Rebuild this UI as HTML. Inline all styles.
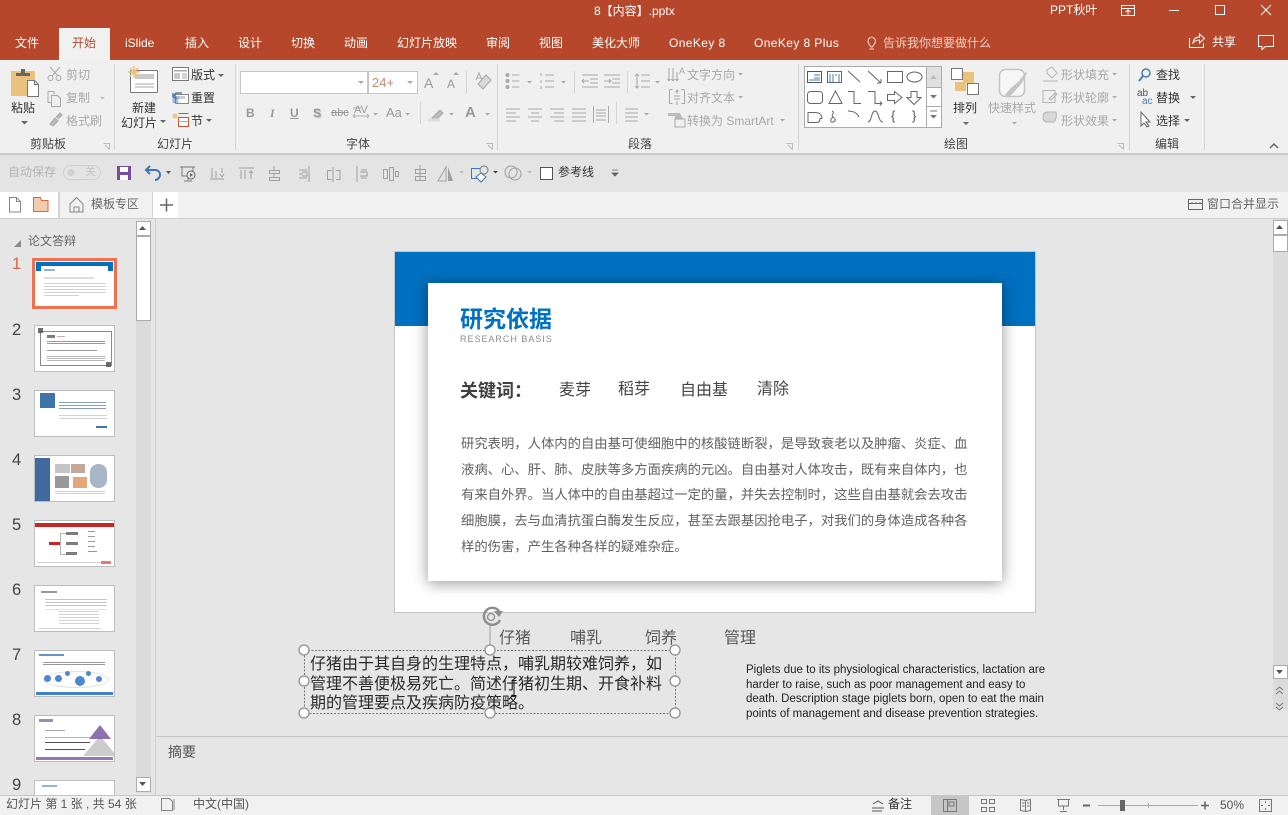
<!DOCTYPE html>
<html lang="zh-CN"><head><meta charset="utf-8"><title>8【内容】.pptx</title>
<style>
html,body{margin:0;padding:0}
body{width:1288px;height:815px;overflow:hidden;position:relative;background:#e6e6e6;font-family:"Liberation Sans","Noto Sans CJK SC",sans-serif;font-size:12px;color:#444}
.b{position:absolute}
.t{position:absolute;white-space:nowrap;line-height:18px;height:18px}
.w{color:#fff}.g{color:#a9a9a9}.d{color:#333}
.lb{color:#444}
svg{position:absolute;left:0;top:0}
.body{font-size:13.33px;color:#626262;left:461px;line-height:18px}
.kw{font-size:16px;color:#444}
.sel{font-size:16px;color:#2a2a2a;left:310px}
.en{font-size:11.5px;color:#222;left:746px;font-family:"Liberation Sans",sans-serif}
.n{font-size:16.5px;color:#444;left:12px;font-family:"Liberation Sans",sans-serif}
.th{position:absolute;left:34px;width:79px;height:45px;background:#fff;border:1px solid #bdbdbd;overflow:hidden}
.th i{position:absolute;display:block;filter:blur(.35px);opacity:.85}
</style></head><body>
<!-- backgrounds -->
<div class="b" style="left:0;top:0;width:1288px;height:60px;background:#b7472a"></div>
<div class="b" style="left:59px;top:28px;width:51px;height:32px;background:#f1f1f1"></div>
<div class="b" style="left:0;top:60px;width:1288px;height:93px;background:#f0f0f0;border-bottom:2px solid #c9c9c9"></div>
<div class="b" style="left:0;top:155px;width:1288px;height:37px;background:#e4e4e4"></div>
<div class="b" style="left:0;top:192px;width:1288px;height:26px;background:#f1f1f1;border-bottom:1px solid #cfcfcf"></div>
<div class="b" style="left:0;top:192px;width:58px;height:26px;background:#fff"></div>
<div class="b" style="left:58px;top:192px;width:2px;height:26px;background:#d4d4d4"></div>
<div class="b" style="left:152px;top:192px;width:1px;height:26px;background:#d4d4d4"></div>
<div class="b" style="left:153px;top:192px;width:25px;height:26px;background:#fff"></div>
<div class="b" style="left:155px;top:219px;width:1px;height:576px;background:#d0d0d0"></div>
<div class="b" style="left:136px;top:221px;width:15px;height:572px;background:#dbdbdb"></div>
<div class="b" style="left:1273px;top:219px;width:15px;height:490px;background:#dbdbdb"></div>
<div class="b" style="left:156px;top:736px;width:1132px;height:1px;background:#c6c6c6"></div>
<div class="b" style="left:0;top:795px;width:1288px;height:20px;background:#f1f1f1;border-top:1px solid #c6c6c6;box-sizing:border-box"></div>
<div class="b" style="left:931px;top:796px;width:38px;height:19px;background:#c6c6c6"></div>

<!-- scrollbars -->
<div class="b" style="left:136px;top:221px;width:13px;height:13px;background:#fff;border:1px solid #ababab"></div>
<div class="b" style="left:136px;top:236px;width:13px;height:83px;background:#fff;border:1px solid #ababab"></div>
<div class="b" style="left:136px;top:777px;width:13px;height:13px;background:#fff;border:1px solid #ababab"></div>
<div class="b" style="left:1273px;top:220px;width:13px;height:13px;background:#fff;border:1px solid #ababab"></div>
<div class="b" style="left:1273px;top:235px;width:13px;height:15px;background:#fff;border:1px solid #ababab"></div>
<div class="b" style="left:1273px;top:665px;width:13px;height:12px;background:#fff;border:1px solid #ababab"></div>

<!-- font boxes -->
<div class="b" style="left:240px;top:71px;width:126px;height:21px;background:#fff;border:1px solid #c6c6c6"></div>
<div class="b" style="left:368px;top:71px;width:48px;height:21px;background:#fff;border:1px solid #c6c6c6"></div>
<!-- gallery -->
<div class="b" style="left:804px;top:66px;width:136px;height:60px;background:#fff;border:1px solid #ababab"></div>
<div class="b" style="left:926px;top:67px;width:14px;height:20px;background:#e0e0e0;border-left:1px solid #ababab"></div>
<div class="b" style="left:926px;top:87px;width:14px;height:19px;background:#fff;border-left:1px solid #ababab;border-top:1px solid #ababab"></div>
<div class="b" style="left:926px;top:106px;width:14px;height:20px;background:#fff;border-left:1px solid #ababab;border-top:1px solid #ababab"></div>

<!-- slide -->
<div class="b" style="left:394px;top:251px;width:640px;height:360px;background:#fff;border:1px solid #c4c4c4"></div>
<div class="b" style="left:395px;top:252px;width:640px;height:74px;background:#0070c0"></div>
<div class="b" style="left:428px;top:283px;width:574px;height:298px;background:#fff;box-shadow:0 2px 14px rgba(0,0,0,.42)"></div>
<div class="t" style="left:460px;top:307px;font-size:23px;line-height:24px;height:24px;font-weight:bold;color:#0070c0">研究依据</div>
<div class="t" style="left:460px;top:330px;font-size:9px;letter-spacing:.98px;color:#8c8c8c">RESEARCH BASIS</div>
<div class="t" style="left:460px;top:381px;font-size:18px;line-height:20px;height:20px;font-weight:bold;color:#404040">关键词：</div>
<div class="t kw" style="left:559px;top:382px">麦芽</div>
<div class="t kw" style="left:618px;top:381px">稻芽</div>
<div class="t kw" style="left:680px;top:382px">自由基</div>
<div class="t kw" style="left:757px;top:381px">清除</div>
<div class="t body" style="top:435px">研究表明，人体内的自由基可使细胞中的核酸链断裂，是导致衰老以及肿瘤、炎症、血</div>
<div class="t body" style="top:461px">液病、心、肝、肺、皮肤等多方面疾病的元凶。自由基对人体攻击，既有来自体内，也</div>
<div class="t body" style="top:486px">有来自外界。当人体中的自由基超过一定的量，并失去控制时，这些自由基就会去攻击</div>
<div class="t body" style="top:512px">细胞膜，去与血清抗蛋白酶发生反应，甚至去跟基因抢电子，对我们的身体造成各种各</div>
<div class="t body" style="top:538px">样的伤害，产生各种各样的疑难杂症。</div>

<!-- below slide -->
<div class="t kw" style="left:499px;top:630px;color:#595959">仔猪</div>
<div class="t kw" style="left:570px;top:630px;color:#595959">哺乳</div>
<div class="t kw" style="left:645px;top:630px;color:#595959">饲养</div>
<div class="t kw" style="left:724px;top:630px;color:#595959">管理</div>
<div class="t sel" style="top:656px">仔猪由于其自身的生理特点，哺乳期较难饲养，如</div>
<div class="t sel" style="top:676px">管理不善便极易死亡。简述仔猪初生期、开食补料</div>
<div class="t sel" style="top:695px">期的管理要点及疾病防疫策略。</div>
<div class="t en" style="top:661px">Piglets due to its physiological characteristics, lactation are</div>
<div class="t en" style="top:676px">harder to raise, such as poor management and easy to</div>
<div class="t en" style="top:690px">death. Description stage piglets born, open to eat the main</div>
<div class="t en" style="top:705px">points of management and disease prevention strategies.</div>
<div class="t" style="left:168px;top:743px;font-size:14px;color:#555">摘要</div>

<!-- thumbnails -->
<div class="b" style="left:32px;top:258px;width:79px;height:45px;background:#fff;border:3px solid #f0704f"></div>
<div class="b" style="left:36px;top:262px;width:77px;height:9px;background:#0070c0"></div>
<div class="b" style="left:41px;top:266px;width:67px;height:20px;background:#fff"></div>
<div class="b" style="left:44px;top:269px;width:11px;height:2px;background:#8fb4d8"></div>
<div class="b" style="left:44px;top:277px;width:50px;height:2px;background:#ddd"></div>
<div class="b" style="left:44px;top:283px;width:62px;height:10px;background:repeating-linear-gradient(#d2d2d2 0 1px,#fff 1px 3px)"></div>
<div class="b" style="left:44px;top:295px;width:35px;height:1px;background:#d2d2d2"></div>

<div class="th" style="top:325px"><i style="left:5px;top:5px;width:70px;height:33px;border:1px solid #777"></i><i style="left:3px;top:2px;width:5px;height:5px;background:#555"></i><i style="left:71px;top:36px;width:5px;height:5px;background:#555"></i><i style="left:12px;top:9px;width:8px;height:3px;background:#666"></i><i style="left:22px;top:10px;width:8px;height:1px;background:#c99"></i><i style="left:12px;top:15px;width:58px;height:4px;background:repeating-linear-gradient(#888 0 1px,#fff 1px 2px)"></i><i style="left:12px;top:24px;width:50px;height:1px;background:#888"></i><i style="left:12px;top:30px;width:58px;height:5px;background:repeating-linear-gradient(#aaa 0 1px,#fff 1px 2px)"></i></div>
<div class="th" style="top:390px"><i style="left:5px;top:2px;width:15px;height:15px;background:#1d5c99"></i><i style="left:24px;top:11px;width:47px;height:8px;background:repeating-linear-gradient(#778aa6 0 1px,#fff 1px 3px)"></i><i style="left:24px;top:24px;width:48px;height:4px;background:repeating-linear-gradient(#ccc 0 1px,#fff 1px 3px)"></i><i style="left:61px;top:35px;width:11px;height:2px;background:#1d5c99"></i></div>
<div class="th" style="top:455px"><i style="left:0;top:2px;width:15px;height:43px;background:#1e4f8f"></i><i style="left:20px;top:8px;width:15px;height:9px;background:#bbb"></i><i style="left:36px;top:8px;width:14px;height:9px;background:#b98"></i><i style="left:20px;top:20px;width:14px;height:12px;background:#888"></i><i style="left:38px;top:21px;width:14px;height:11px;background:#d96"></i><i style="left:55px;top:8px;width:17px;height:24px;background:#9ab;border-radius:8px"></i><i style="left:20px;top:35px;width:50px;height:3px;background:repeating-linear-gradient(#ccc 0 1px,#fff 1px 2px)"></i></div>
<div class="th" style="top:520px"><i style="left:0;top:2px;width:79px;height:4px;background:#c00000"></i><i style="left:14px;top:21px;width:11px;height:3px;background:#c00000"></i><i style="left:31px;top:11px;width:12px;height:3px;background:#666"></i><i style="left:31px;top:21px;width:12px;height:3px;background:#666"></i><i style="left:31px;top:31px;width:11px;height:3px;background:#666"></i><i style="left:25px;top:12px;width:5px;height:20px;border:1px solid #aaa;border-right:0"></i><i style="left:53px;top:10px;width:7px;height:1px;background:#888"></i><i style="left:53px;top:15px;width:7px;height:1px;background:#888"></i><i style="left:53px;top:20px;width:7px;height:1px;background:#888"></i><i style="left:53px;top:25px;width:7px;height:1px;background:#888"></i><i style="left:53px;top:30px;width:9px;height:1px;background:#888"></i><i style="left:2px;top:41px;width:64px;height:1px;background:#ccc"></i><i style="left:66px;top:40px;width:10px;height:3px;background:#d66"></i></div>
<div class="th" style="top:585px"><i style="left:6px;top:5px;width:16px;height:2px;background:#888"></i><i style="left:10px;top:13px;width:62px;height:8px;background:repeating-linear-gradient(#bbb 0 1px,#fff 1px 3px)"></i><i style="left:10px;top:23px;width:62px;height:1px;background:#ddd"></i><i style="left:24px;top:25px;width:40px;height:14px;background:repeating-linear-gradient(#ccc 0 1px,#fff 1px 3px)"></i><i style="left:4px;top:42px;width:62px;height:1px;background:#ccc"></i></div>
<div class="th" style="top:650px"><i style="left:4px;top:3px;width:25px;height:2px;background:#4a7fc0"></i><i style="left:8px;top:11px;width:62px;height:4px;background:repeating-linear-gradient(#888 0 1px,#fff 1px 2px)"></i><i style="left:8px;top:20px;width:64px;height:15px;border:1px solid #ddd;border-radius:50%"></i><i style="left:9px;top:24px;width:7px;height:7px;background:#2e75c6;border-radius:50%"></i><i style="left:20px;top:24px;width:7px;height:7px;background:#2e75c6;border-radius:50%"></i><i style="left:30px;top:20px;width:5px;height:5px;background:#2e75c6;border-radius:50%"></i><i style="left:40px;top:25px;width:10px;height:10px;background:#2e75c6;border-radius:50%"></i><i style="left:51px;top:20px;width:5px;height:5px;background:#2e75c6;border-radius:50%"></i><i style="left:61px;top:25px;width:6px;height:6px;background:#2e75c6;border-radius:50%"></i><i style="left:1px;top:41px;width:77px;height:3px;background:#1f6cc0"></i></div>
<div class="th" style="top:715px"><i style="left:4px;top:3px;width:14px;height:3px;background:#8c7aa6"></i><i style="left:10px;top:14px;width:20px;height:1px;background:#999"></i><i style="left:10px;top:21px;width:45px;height:1px;background:#aaa"></i><i style="left:10px;top:26px;width:45px;height:1px;background:#333"></i><i style="left:10px;top:33px;width:40px;height:1px;background:#333"></i><i style="left:48px;top:20px;width:0;height:0;border-left:17px solid transparent;border-right:17px solid transparent;border-bottom:20px solid #c4c4c4"></i><i style="left:54px;top:9px;width:0;height:0;border-left:11px solid transparent;border-right:11px solid transparent;border-bottom:14px solid #7b5aa0"></i><i style="left:1px;top:41px;width:77px;height:3px;background:#8064a2"></i></div>
<div class="th" style="top:780px;height:30px;border-bottom:0"><i style="left:7px;top:4px;width:15px;height:2px;background:#7fa8d4"></i></div>
<div class="b" style="left:0;top:795px;width:151px;height:1px;background:#c6c6c6"></div>
<div class="b" style="left:0;top:796px;width:155px;height:19px;background:#f1f1f1"></div>

<!-- numbers -->
<div class="t g" style="left:28px;top:232px;color:#666">论文答辩</div>
<div class="t n" style="top:255px;color:#e0623f">1</div>
<div class="t n" style="top:321px">2</div>
<div class="t n" style="top:386px">3</div>
<div class="t n" style="top:451px">4</div>
<div class="t n" style="top:516px">5</div>
<div class="t n" style="top:581px">6</div>
<div class="t n" style="top:646px">7</div>
<div class="t n" style="top:711px">8</div>
<div class="t n" style="top:776px">9</div>

<!-- title bar & tabs -->
<div class="t w" style="left:594px;top:2px">8【内容】.pptx</div>
<div class="t w" style="left:1050px;top:1px">PPT秋叶</div>
<div class="t w" style="left:15px;top:34px">文件</div>
<div class="t" style="left:72px;top:34px;color:#b7472a">开始</div>
<div class="t w" style="left:125px;top:34px">iSlide</div>
<div class="t w" style="left:185px;top:34px">插入</div>
<div class="t w" style="left:238px;top:34px">设计</div>
<div class="t w" style="left:291px;top:34px">切换</div>
<div class="t w" style="left:344px;top:34px">动画</div>
<div class="t w" style="left:397px;top:34px">幻灯片放映</div>
<div class="t w" style="left:486px;top:34px">审阅</div>
<div class="t w" style="left:539px;top:34px">视图</div>
<div class="t w" style="left:592px;top:34px">美化大师</div>
<div class="t w" style="left:669px;top:34px;letter-spacing:.4px">OneKey 8</div>
<div class="t w" style="left:754px;top:34px;letter-spacing:.4px">OneKey 8 Plus</div>
<div class="t" style="left:883px;top:34px;color:#f0cfc4">告诉我你想要做什么</div>
<div class="t w" style="left:1212px;top:33px">共享</div>

<!-- clipboard -->
<div class="t d" style="left:11px;top:99px">粘贴</div>
<div class="t g" style="left:66px;top:66px">剪切</div>
<div class="t g" style="left:66px;top:89px">复制</div>
<div class="t g" style="left:66px;top:112px">格式刷</div>
<div class="t lb" style="left:30px;top:135px">剪贴板</div>
<!-- slides -->
<div class="t d" style="left:132px;top:99px">新建</div>
<div class="t d" style="left:121px;top:114px">幻灯片</div>
<div class="t d" style="left:191px;top:66px">版式</div>
<div class="t d" style="left:191px;top:89px">重置</div>
<div class="t d" style="left:191px;top:112px">节</div>
<div class="t lb" style="left:157px;top:135px">幻灯片</div>
<!-- font -->
<div class="t" style="left:372px;top:74px;color:#c28a70;font-size:13px">24+</div>
<div class="t g" style="left:246px;top:104px;font-weight:bold;color:#999">B</div>
<div class="t g" style="left:270px;top:104px;font-style:italic;font-family:'Liberation Serif',serif;font-weight:bold;color:#999">I</div>
<div class="t g" style="left:290px;top:104px;font-weight:bold;text-decoration:underline;color:#999">U</div>
<div class="t g" style="left:313px;top:104px;font-weight:bold;color:#999;text-shadow:1px 1px 1px #bbb">S</div>
<div class="t g" style="left:331px;top:104px;color:#999;text-decoration:line-through;font-size:11px">abc</div>
<div class="t g" style="left:354px;top:101px;color:#999;font-size:11px">AV</div>
<div class="t g" style="left:386px;top:104px;color:#999;font-size:13px">Aa</div>
<div class="t g" style="left:424px;top:74px;color:#999;font-size:14px">A</div>
<div class="t g" style="left:447px;top:75px;color:#999;font-size:12px">A</div>
<div class="t g" style="left:465px;top:104px;color:#999;font-size:15px;font-weight:bold">A</div>
<div class="t lb" style="left:346px;top:135px">字体</div>
<!-- para -->
<div class="t g" style="left:687px;top:66px">文字方向</div>
<div class="t g" style="left:687px;top:89px">对齐文本</div>
<div class="t g" style="left:687px;top:112px">转换为 SmartArt</div>
<div class="t lb" style="left:628px;top:135px">段落</div>
<!-- drawing -->
<div class="t d" style="left:953px;top:99px">排列</div>
<div class="t g" style="left:988px;top:99px">快速样式</div>
<div class="t g" style="left:1061px;top:66px">形状填充</div>
<div class="t g" style="left:1061px;top:89px">形状轮廓</div>
<div class="t g" style="left:1061px;top:112px">形状效果</div>
<div class="t lb" style="left:944px;top:135px">绘图</div>
<div class="t d" style="left:1156px;top:66px">查找</div>
<div class="t d" style="left:1156px;top:89px">替换</div>
<div class="t d" style="left:1156px;top:112px">选择</div>
<div class="t lb" style="left:1155px;top:135px">编辑</div>
<div class="t" style="left:891px;top:107px;font-size:13px;color:#555">{</div>
<div class="t" style="left:912px;top:107px;font-size:13px;color:#555">}</div>

<!-- QAT -->
<div class="t g" style="left:8px;top:163px;color:#b4b4b4">自动保存</div>
<div class="t" style="left:85px;top:163px;color:#c4c4c4;font-size:11px">关</div>
<div class="t d" style="left:558px;top:163px">参考线</div>
<!-- tabs -->
<div class="t" style="left:91px;top:195px;color:#666">模板专区</div>
<div class="t" style="left:1207px;top:195px;color:#666">窗口合并显示</div>

<!-- status -->
<div class="t" style="left:6px;top:795px;color:#555">幻灯片 第 1 张 , 共 54 张</div>
<div class="t" style="left:193px;top:795px;color:#555">中文(中国)</div>
<div class="t d" style="left:888px;top:795px">备注</div>
<div class="t" style="left:1220px;top:796px;color:#555">50%</div>

<svg width="1288" height="815" viewBox="0 0 1288 815" fill="none">
<!-- window controls -->
<g stroke="#fff" stroke-width="1">
<path d="M1121.500 5.500h13v10h-13zM1121.500 8.500h13M1128 14.500v-4M1125.500 12l2.500-2 2.500 2"/>
<path d="M1169 10.500h10"/><rect x="1215.500" y="5.500" width="9" height="9"/><path d="M1261 5l10 10M1271 5l-10 10"/>
<path d="M1189.500 38v9.500h14V43M1193 43c.5-4 3-6 6.500-6v-3l5 4.500-5 4.500v-3c-2.500 0-5 1-6.500 3z"/>
<path d="M1258.500 35.500h15v11h-8l-3.500 3v-3h-3.500z"/>
</g>
<path d="M871 47c-1-2-3-3-3-6a3.700 3.700 0 0 1 7.400 0c0 3-2 4-3 6zM869.500 49h4.500" stroke="#f6ded6"/>

<!-- separators -->
<path d="M114.500 64v86M235.500 64v86M497.500 64v86M798.500 64v86M1129.500 64v86M1204.500 64v86" stroke="#d4d4d4"/>
<path d="M466.500 71v22M574.500 71v22M627.500 71v22M616.500 102v22M420.500 102v22" stroke="#d4d4d4"/>
<!-- dialog launchers -->
<path d="M103.500 143.500h6v6M105 145l4 4M486.500 143.500h6v6M488 145l4 4M786.500 143.500h6v6M788 145l4 4M1117.500 143.500h6v6M1119 145l4 4" stroke="#bbb"/>
<path d="M1270 148l4-4 4 4" stroke="#666" stroke-width="1.500"/>

<!-- paste -->
<rect x="11" y="71" width="24" height="25" fill="#eac27e"/>
<path d="M16 73h5v-4h4v4h5v3H16z" fill="#666"/>
<path d="M27.500 80.500h7l4 4v12h-11z" fill="#fff" stroke="#777"/>
<path d="M34.500 80.500v4h4" stroke="#777"/>
<g fill="#666"><path d="M21 121h7l-3.500 3.500zM160 120h6l-3 3zM218 74h6l-3 3zM206 119h6l-3 3zM1190 96h6l-3 3zM1184 119h6l-3 3z"/></g>
<!-- scissors etc -->
<g stroke="#aaa" fill="none">
<path d="M50 67l8 9M60 67l-8 9"/><circle cx="50.500" cy="78" r="2.500"/><circle cx="58.500" cy="78" r="2.500"/>
<path d="M48 91.500h6v3M51.500 95.500h6l3 3v8h-9zM48 91.500v11h3"/>
<path d="M50 124l5-6 3 3-5 5zM56 117l4-4 2 2-4 4" fill="#bbb"/>
</g>
<path d="M100 97h5l-2.500 2.500z" fill="#bbb"/>
<!-- new slide -->
<rect x="130.500" y="70.500" width="27" height="22" rx="1" fill="#fff" stroke="#777"/>
<rect x="135" y="74" width="19" height="5" fill="#c9c9c9"/>
<path d="M135 84h19M135 87h19" stroke="#aaa"/>
<g stroke="#eac27e" stroke-width="1.500"><path d="M134 66v12M128 72h12M130 68l8 8M138 68l-8 8"/></g>
<!-- layout -->
<rect x="172.500" y="67.500" width="16" height="13" fill="#fff" stroke="#777"/>
<path d="M174 70h13v1.500h-13z" fill="#aaa"/><rect x="174" y="73" width="6" height="6" fill="#c9c9c9"/><path d="M182 74h5M182 76h5M182 78h5" stroke="#aaa"/>
<!-- reset -->
<rect x="175.500" y="94.500" width="13" height="9" fill="#fff" stroke="#888"/>
<path d="M178 96h7v3h-7z" fill="#ccc"/>
<path d="M173 97l3-4h6M173 97l4 1.500M173 97v-4" stroke="#4a7fb5" stroke-width="1.500" fill="none"/>
<path d="M172.500 96h6v7h-6z" fill="#4a7fb5" opacity=".5"/>
<!-- section -->
<path d="M178.500 113.500h10M178.500 117.500h10v9h-10z" stroke="#c8553a" fill="#fff"/>
<path d="M178.500 121.500h10" stroke="#aaa"/>
<path d="M175 113v6M172 116h6M173 114l4 4M177 114l-4 4" stroke="#eac27e"/>
<!-- carets font -->
<g fill="#aaa"><path d="M358 81h6l-3 3zM407 81h6l-3 3zM373 113h5l-2.500 2.500zM405 113h5l-2.500 2.500zM449 113h5l-2.500 2.500zM485 113h5l-2.500 2.500zM527 81h5l-2.500 2.500zM561 81h5l-2.500 2.500zM655 81h5l-2.500 2.500zM644 113h5l-2.500 2.500zM738 73h5l-2.500 2.500zM738 96h5l-2.500 2.500zM780 119h5l-2.500 2.500zM1112 73h5l-2.500 2.500zM1112 96h5l-2.500 2.500zM1112 119h5l-2.500 2.500zM1012 122h5l-2.500 2.500zM433 75l3-3 3 3zM453 75l3-3 3 3z"/></g>
<g stroke="#a9a9a9">
<path d="M361 108h-8M353 116h16M353 116l2-2M353 116l2 2M369 116l-2-2M369 116l-2 2" opacity=".9"/>
<!-- clear format -->
<path d="M478 84l8-9 5 5-8 9z" fill="#d8d8d8"/><path d="M476 80l3-7 3 7M477 78h4"/>
<!-- highlight -->
<path d="M432 118l8-8 3 3-8 8z" fill="#bbb"/>
<path d="M428 120h12" stroke="#ddd" stroke-width="3"/>
<!-- bullets -->
<path d="M512 75h7.500M512 81h7.500M512 87h7.500M545 75h9M545 81h9M545 87h9"/>
<circle cx="507.500" cy="75" r="1.500" fill="#aaa"/><circle cx="507.500" cy="81" r="1.500" fill="#aaa"/><circle cx="507.500" cy="87" r="1.500" fill="#aaa"/>
<path d="M541 73v3M541 80v3M541 86v3"/>
<!-- indent -->
<path d="M582 75h16M590 79h8M590 83h8M582 87h16M589 81h-7M584 79l-2 2 2 2M604 75h16M612 79h8M612 83h8M604 87h16M604 81h7M609 79l2 2-2 2"/>
<!-- line spacing -->
<path d="M641 75h9M641 81h9M641 87h9M637 74v14M635 76l2-2 2 2M635 86l2 2 2-2"/>
<!-- align -->
<path d="M506 109h14M506 113h10M506 117h14M506 121h10M528 109h14M531 113h8M528 117h14M531 121h8M550 109h14M554 113h10M550 117h14M554 121h10M572 109h14M572 113h14M572 117h14M572 121h14M593.500 106v17M608.500 106v17M596 110h10M596 113h10M596 116h10M596 120h10"/>
<path d="M625 109h13M625 113h13M625 117h13M625 121h13"/>
<!-- text dir -->
<path d="M669 68v13M673 68v13M677 72v9M669 81l-1.500-2M669 81l1.500-2M673 81l-1.500-2M673 81l1.500-2M677 81l-1.500-2M677 81l1.500-2"/>
<path d="M669.500 89.500h3M669.500 89.500v14h3M684 89.500h-3M684.500 89.500v14h-3M674 96h6M674 99h6M677 90v4M675.500 92l1.500-2 1.500 2M677 105v-4"/>
</g>
<path d="M668 113h12l3 6h-8v-3h-7z" fill="#bbb"/><rect x="675" y="119" width="10" height="8" fill="#f0f0f0" stroke="#aaa"/>
<text x="679" y="74" font-size="9" fill="#aaa" font-family="Liberation Sans">A</text>
<!-- arrange -->
<rect x="963" y="72" width="11" height="11" fill="#eac27e"/>
<rect x="955" y="82" width="11" height="9" fill="#eac27e"/>
<rect x="951.500" y="68.500" width="11" height="11" fill="#fff" stroke="#777"/>
<rect x="967.500" y="83.500" width="11" height="11" fill="#fff" stroke="#777"/>
<path d="M963 122h6l-3 3z" fill="#666"/>
<!-- quick style -->
<rect x="999.500" y="69.500" width="25" height="27" rx="6" fill="#f6f6f6" stroke="#c4c4c4" stroke-width="1.500"/>
<path d="M1005 95l5-6 9-8 7-9 1 1-5 10-8 9-5 5z" fill="#c4c4c4"/>
<!-- shape effect icons -->
<g stroke="#b4b4b4">
<path d="M1047 70l5-3 5 6-5 5-5-5zM1043 81h15"/>
<path d="M1043 90.500h12v12h-12zM1049 99l6-6 2 1-6 6z" fill="#f0f0f0"/>
<path d="M1043 116c0-3 3-4 6-4h7c1 3 0 8-2 10h-7c-3 0-4-3-4-6z" fill="#d8d8d8"/>
</g>
<!-- find -->
<circle cx="1146" cy="73" r="4" stroke="#4a7fb5" stroke-width="1.500"/><path d="M1143 76l-4 5" stroke="#4a7fb5" stroke-width="2"/>
<text x="1137" y="96" font-size="10" fill="#555" font-family="Liberation Sans">ab</text>
<text x="1142" y="104" font-size="10" fill="#4a7fb5" font-family="Liberation Sans">ac</text>
<path d="M1141 112v14l3-3 3 4 2-1-3-4h4z" fill="#fff" stroke="#666"/>
<!-- gallery shapes -->
<g stroke="#666">
<rect x="807.500" y="71.500" width="14" height="11" stroke="#555"/><path d="M814 75h6M814 78h6M809 80h11" stroke="#4a7fb5"/>
<rect x="827.500" y="71.500" width="14" height="11"/><path d="M830 74v8M833 74v8M836 74v2M839 74v8" stroke="#4a7fb5"/>
<path d="M848 71l12 11M868 71l13 12M881 83v-4M881 83h-4"/>
<rect x="887.500" y="71.500" width="15" height="11"/>
<ellipse cx="914.500" cy="77" rx="7.500" ry="5"/>
<rect x="807.500" y="91.500" width="15" height="12" rx="3"/>
<path d="M835.500 91l6.500 12.500h-13zM848 91.500h6v12h7M868 91.500h7v12h7M882 103.500l-2-2M882 103.500l-2 2"/>
<path d="M887.500 94.500h7v-3l7.500 6-7.500 6v-3h-7zM911 91.500h6v6h4l-7 7-7-7h4z"/>
<path d="M808 112.500h7c4 0 7 2 7 6l-2 0c0 3-1 4-4 4h-8zM832 111c4 2-2 4 1 6s3 4 0 5-3-3 0-5M848 111c5 0 9 2 11 6M868 122c4 0 3-11 7-11s3 11 8 11"/>
</g>
<g fill="#777"><path d="M930 95h7l-3.500 3.500z"/><path d="M930 115h7l-3.500 3.500z"/></g>
<path d="M930 111h7" stroke="#777"/>
<path d="M930 79l3.500-4 3.500 4z" fill="#bbb"/>

<!-- QAT icons -->
<rect x="117" y="166" width="14" height="14" fill="#7a4e9c"/><rect x="120" y="167" width="8" height="5" fill="#fff"/><rect x="120" y="175" width="8" height="5" fill="#fff"/>
<path d="M147 170h8c4 0 5 3 5 5s-2 5-5 5" stroke="#3f75b4" stroke-width="2"/><path d="M150 166l-4 4 4 4" stroke="#3f75b4" stroke-width="2"/>
<path d="M166 171h5l-2.500 3z" fill="#555"/>
<g stroke="#777"><path d="M180 167h15M182 167v9h11v-9M188 176v4M184 181h8"/></g><circle cx="191" cy="175" r="4" fill="#e4e4e4" stroke="#666"/><path d="M190 173l3 2-3 2z" fill="#666"/>
<g stroke="#a0a0a0">
<path d="M210 179h14M212 168v10M216 171v7M222 168v5M222 177l-2-3M222 177l2-3"/>
<path d="M239 168h15M241 170v9M245 170v9M251 179v-8M249 173l2-2 2 2"/>
<path d="M274 166v4M269.500 170.500h10v3h-10zM274 174v3M269.500 177.500h10v3h-10z"/>
<path d="M309 166v16M299 170h8M299 178h8M302 172h5v4h-5M303 174h-4"/>
<path d="M333 167v15M327.500 170.500h4M336 170.500h4v9h-4M327.500 170.500v9h4"/>
<path d="M357 166v16M361 170h6M361 178h6M360 172h7v4h-7"/>
<rect x="383.500" y="169.500" width="4" height="9"/><rect x="389.500" y="167.500" width="4" height="13"/><rect x="395.500" y="171.500" width="3" height="5"/>
<path d="M420 165v16M415.500 169.500h10v4h-10zM415.500 176.500h10v4h-10z"/>
<path d="M446 167v14h-8z"/>
<circle cx="511" cy="172" r="6"/><circle cx="515" cy="174" r="6"/>
</g>
<path d="M448 167v14h5z" fill="#a0a0a0"/>
<path d="M459 171h5l-2.500 2.500zM527 171h5l-2.500 2.500z" fill="#bbb"/>
<rect x="471.500" y="168.500" width="10" height="10" stroke="#3f75b4"/>
<path d="M481 173l5 4-5 5-5-5z" fill="#fff" stroke="#3f75b4"/><circle cx="484" cy="170" r="4" stroke="#777" fill="#e4e4e4"/>
<path d="M493 171h5l-2.500 2.500z" fill="#444"/>
<rect x="540.500" y="167.500" width="12" height="12" fill="#fff" stroke="#555"/>
<path d="M612 170h6M612 173h6l-3 3z" stroke="#666" fill="#666" stroke-width=".8"/>
<!-- toggle -->
<rect x="63.500" y="165.500" width="37" height="14" rx="7" stroke="#cfcfcf"/><circle cx="71" cy="172.500" r="3.500" fill="#d0d0d0"/>

<!-- tabstrip -->
<path d="M9.500 197.500h7l4 4v10.500h-11z" stroke="#888" fill="#fff"/><path d="M16.500 197.500v4h4" stroke="#888"/>
<path d="M33.500 197.500h7l1 3h6.500v11h-14.500z" fill="#f0cdb0" stroke="#d86a3a"/>
<path d="M70 204l6.500-6.500 6.500 6.500v8h-13zM74 212v-5h5v5" stroke="#888"/>
<path d="M160 205h13M166.500 198.500v13" stroke="#666" stroke-width="1.500"/>
<path d="M1188.500 199.500h14v10h-14zM1188.500 203.500h14" stroke="#666"/><path d="M1191 203h2M1195 203h2M1199 203h2" stroke="#666"/>

<!-- panel -->
<path d="M14 247h7v-7z" fill="#8a8a8a"/>
<path d="M139 230l3.500-4 3.500 4zM1276 229l3.500-4 3.500 4z" fill="#555"/>
<path d="M139 782l3.500 4 3.500-4zM1276 670l3.500 4 3.500-4z" fill="#555"/>
<path d="M1276 690l3.500-3 3.500 3M1276 694l3.500-3 3.500 3M1276 703l3.500 3 3.500-3M1276 707l3.500 3 3.500-3" stroke="#777"/>

<!-- selection -->
<rect x="304.500" y="650.500" width="371" height="63" stroke="#777" stroke-dasharray="2 1.500"/>
<path d="M490 625v25" stroke="#999"/>
<g fill="#fff" stroke="#919191" stroke-width="1.300">
<circle cx="304" cy="650" r="5"/><circle cx="490" cy="650" r="5"/><circle cx="675" cy="650" r="5"/>
<circle cx="304" cy="681" r="5"/><circle cx="675" cy="681" r="5"/>
<circle cx="304" cy="713" r="5"/><circle cx="490" cy="713" r="5"/><circle cx="675" cy="713" r="5"/>
</g>
<path d="M499 611a8.500 8.500 0 1 0 1 9" stroke="#8c8c8c" stroke-width="2.400"/>
<circle cx="491" cy="617" r="3.500" stroke="#8c8c8c" stroke-width="1.300"/>
<path d="M494 611h9l-4 6z" fill="#8c8c8c"/>
<path d="M511.500 680.500h5M514 681v14M511.500 695.500h5" stroke="#111"/>

<!-- statusbar icons -->
<path d="M161.500 798.500h8l3 3v9h-11zM174 799v11" stroke="#888"/>
<path d="M872 808h12M872 811h10M873 804l5-3 5 3" stroke="#555"/>
<path d="M943.500 799.500h13v12h-13zM947.500 799.500v12M949 802h5v4h-5z" stroke="#777"/>
<path d="M981.500 799.500h5v4h-5zM989.500 799.500h5v4h-5zM981.500 807.500h5v4h-5zM989.500 807.500h5v4h-5z" stroke="#777"/>
<path d="M1020.500 799.500l5 1 5-1v11l-5 1-5-1zM1025.500 800v11M1022 803h2.500M1022 806h2.500M1027 803h2.500M1027 806h2.500" stroke="#777"/>
<path d="M1057 799.500h13M1058.500 800v6h10v-6M1063.500 806v4M1060 811.500h7" stroke="#777"/>
<path d="M1083 805.500h7" stroke="#666" stroke-width="2"/>
<path d="M1098 805.500h100M1148.500 803v5" stroke="#aaa"/>
<rect x="1120" y="800" width="5" height="11" fill="#666"/>
<path d="M1201 805.500h8M1205 801.500v8" stroke="#666" stroke-width="1.500"/>
<path d="M1259.500 799.500h12v12h-12z" stroke="#777"/><path d="M1265.500 801v2M1265.500 808v2M1261 805.500h2M1268 805.500h2" stroke="#777"/>
</svg>
</body></html>
